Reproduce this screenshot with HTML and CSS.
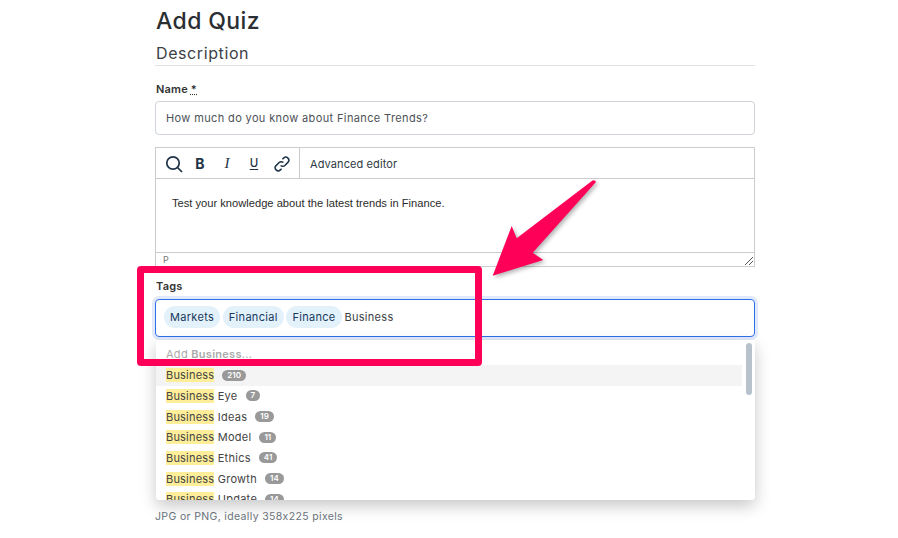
FILE: index.html
```html
<!DOCTYPE html>
<html lang="en">
<head>
<meta charset="utf-8">
<title>Add Quiz</title>
<link rel="stylesheet" href="styles.css">
</head>
<body>
<main class="page">
  <h1 class="title">Add Quiz</h1>
  <h2 class="section">Description</h2>
  <div class="field name-field">
    <label class="label">Name <abbr class="req">*</abbr></label>
    <div class="input">How much do you know about Finance Trends?</div>
  </div>
  <div class="editor">
    <div class="toolbar">
      <div class="tools">
        <svg class="ico ico-search" viewBox="0 0 18 18" width="18" height="18"><circle cx="8" cy="8" r="6.2"/><path d="M12.5 12.5L17 17"/></svg>
        <span class="tool tool-b">B</span>
        <span class="tool tool-i">I</span>
        <span class="tool tool-u">U</span>
        <svg class="ico ico-link" viewBox="0 0 16 16" width="16" height="16"><path d="M6.6 9.4a3 3 0 0 0 4.3 0l3-3a3 3 0 0 0-4.3-4.3L8.4 3.3"/><path d="M9.4 6.6a3 3 0 0 0-4.3 0l-3 3a3 3 0 0 0 4.3 4.3l1.2-1.2"/></svg>
      </div>
      <div class="adv">Advanced editor</div>
    </div>
    <div class="editor-body">Test your knowledge about the latest trends in Finance.</div>
    <div class="statusbar">
      <span>P</span>
      <svg class="grip" viewBox="0 0 8 8" width="8" height="8"><path d="M0 8L8 0M4 8L8 4"/></svg>
    </div>
  </div>
  <div class="field tags-field">
    <label class="label">Tags</label>
    <div class="tag-input">
      <span class="tag">Markets</span>
      <span class="tag">Financial</span>
      <span class="tag">Finance</span>
      <span class="typed">Business</span>
    </div>
    <div class="dropdown">
      <div class="add">Add <b>Business</b>...</div>
      <ul class="options">
        <li class="opt active"><mark>Business</mark><span class="count">210</span></li>
        <li class="opt"><mark>Business</mark> Eye<span class="count">7</span></li>
        <li class="opt"><mark>Business</mark> Ideas<span class="count">19</span></li>
        <li class="opt"><mark>Business</mark> Model<span class="count">11</span></li>
        <li class="opt"><mark>Business</mark> Ethics<span class="count">41</span></li>
        <li class="opt"><mark>Business</mark> Growth<span class="count">14</span></li>
        <li class="opt"><mark>Business</mark> Update<span class="count">14</span></li>
      </ul>
      <div class="thumb"></div>
    </div>
  </div>
  <p class="hint">JPG or PNG, ideally 358x225 pixels</p>
</main>
<div class="callout"></div>
<svg class="arrow" viewBox="0 0 898 538" width="898" height="538"><path d="M492.7 275.7L511.7 226L516.7 238.3L592.5 180.6Q595 179.5 596 182L532.7 252.7L543.3 260Z"/></svg>
</body>
</html>
```
FILE: styles.css
```css
* { box-sizing: border-box; }
html, body { margin: 0; height: 538px; overflow: hidden; background: #fff; }
body {
  position: relative;
  font-family: Inter, "Open Sans", "Liberation Sans", sans-serif;
  color: #333;
}
.page { width: 600px; margin-left: 155px; padding-top: 6px; }
.title { margin: 0; font-size: 23px; line-height: 30px; font-weight: 500; color: #2b2f33; padding-left: 1px; letter-spacing: 0.4px; }
.section { margin: 5px 0 0; font-size: 16px; line-height: 24px; font-weight: 400; color: #3c4146; padding: 0 0 0 1px; height: 25px; border-bottom: 1px solid #dee2e6; letter-spacing: 0.6px; }
.field { position: relative; }
.name-field { margin-top: 16px; }
.label { display: block; font-size: 11px; line-height: 15px; font-weight: 600; color: #333; padding-left: 1px; letter-spacing: 0.2px; }
.req { text-decoration: underline dotted; }
.input {
  margin-top: 4px; height: 34px; border: 1px solid #ced4da; border-radius: 4px;
  padding: 0 10px; font-size: 11px; line-height: 32px; color: #4d5257; letter-spacing: 0.37px;
}
.editor { margin-top: 12px; height: 120px; border: 1px solid #ccc; display: flex; flex-direction: column; }
.toolbar { display: flex; height: 31px; border-bottom: 1px solid #ccc; flex: none; }
.tools { width: 144px; display: flex; align-items: center; padding-left: 9px; border-right: 1px solid #ccc; height: 31px; color: #1f3347; }
.ico { fill: none; stroke: #1f3347; flex: none; }
.ico-search { stroke-width: 1.7; }
.ico-link { stroke-width: 1.5; margin-left: 14px; }
.tool { display: block; text-align: center; }
.tool-b { width: 14px; margin-left: 10px; font-size: 14px; font-weight: 700; }
.tool-i { width: 10px; margin-left: 15px; font: italic 15px "Liberation Serif", serif; }
.tool-u { width: 12px; margin-left: 16px; font-size: 11.5px; font-weight: 500; line-height: 11px; text-decoration: underline; text-underline-offset: 2px; }
.adv { padding-left: 10px; font-size: 11px; line-height: 32px; color: #2f3a45; letter-spacing: 0.1px; }
.editor-body { flex: 1; padding: 15px 16px 0; font: 11.15px/18px "Liberation Sans", Arial, sans-serif; color: #2b2b2b; }
.statusbar { height: 14px; flex: none; border-top: 1px solid #ccc; display: flex; justify-content: space-between; align-items: center; padding: 0 0 0 7px; font-size: 9px; color: #777; }
.grip { fill: none; stroke: #555; stroke-width: 1; align-self: flex-end; margin: 0 1px 1px 0; }
.tags-field { margin-top: 12px; }
.tag-input {
  margin-top: 5px; height: 38px; border: 1px solid #2f6fed; border-radius: 4px;
  box-shadow: 0 0 0 3px rgba(90, 140, 240, .18);
  display: flex; align-items: center; padding: 0 0 3px 8px; gap: 2px; font-size: 11px; letter-spacing: 0.3px;
}
.tag { background: #e3f1fb; color: #16395c; border-radius: 11px; padding: 0 6px; height: 22px; line-height: 22px; margin-right: 0.8px; }
.typed { color: #3c4146; }
.dropdown {
  position: absolute; left: 1px; right: 0; top: 61px; height: 160px; overflow: hidden;
  background: #fff; border-radius: 3px; box-shadow: 0 6px 16px rgba(0, 0, 0, .22);
  font-size: 11px; letter-spacing: 0.28px;
}
.add { height: 25px; padding: 7px 10px 0; line-height: 14px; color: #aaa; }
.add b { font-weight: 600; }
.options { margin: 0 13px 0 0; padding: 0; list-style: none; }
.opt { height: 20.67px; line-height: 20px; padding-left: 10px; display: flex; align-items: center; white-space: pre; color: #444; }
.opt.active { background: #f4f4f4; }
.opt mark { background: #ffee99; color: #444; height: 14px; line-height: 14px; align-self: center; letter-spacing: 0.2px; }
.count { margin-left: 8px; background: #999; color: #fff; font-size: 8px; font-weight: 600; height: 11px; line-height: 11px; border-radius: 6px; padding: 0 5px; letter-spacing: 0; }
.thumb { position: absolute; top: 3px; right: 3px; width: 6px; height: 52px; background: #b8c2cc; border-radius: 3px; }
.hint { margin: 173px 0 0; font-size: 10.5px; line-height: 14px; color: #6c757d; letter-spacing: 0.35px; }
.callout { position: absolute; left: 137px; top: 266px; width: 345px; height: 100px; border: 7px solid #ff0059; border-radius: 4px; }
.arrow { position: absolute; left: 0; top: 0; pointer-events: none; filter: drop-shadow(2px 2px 2px rgba(0,0,0,.3)); }
.arrow path { fill: #ff0059; }
```
